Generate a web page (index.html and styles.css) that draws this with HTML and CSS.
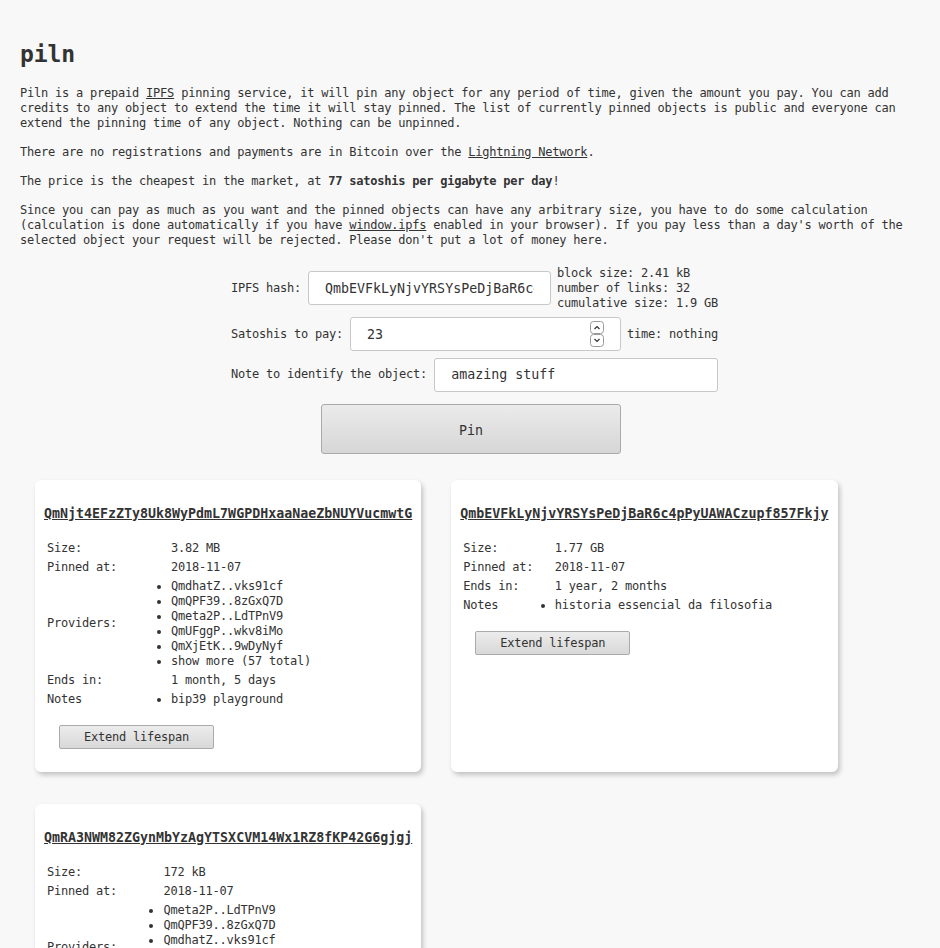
FILE: index.html
```html
<!DOCTYPE html>
<html lang="en">
<head>
<meta charset="utf-8">
<title>piln</title>
<link rel="stylesheet" href="styles.css">
</head>
<body>
<h1 class="title">piln</h1>
<p class="text">Piln is a prepaid <a href="#">IPFS</a> pinning service, it will pin any object for any period of time, given the amount you pay. You can add credits to any object to extend the time it will stay pinned. The list of currently pinned objects is public and everyone can extend the pinning time of any object. Nothing can be unpinned.</p>
<p class="text">There are no registrations and payments are in Bitcoin over the <a href="#">Lightning Network</a>.</p>
<p class="text">The price is the cheapest in the market, at <b>77 satoshis per gigabyte per day</b>!</p>
<p class="text">Since you can pay as much as you want and the pinned objects can have any arbitrary size, you have to do some calculation (calculation is done automatically if you have <a href="#">window.ipfs</a> enabled in your browser). If you pay less than a day's worth of the selected object your request will be rejected. Please don't put a lot of money here.</p>

<form class="pin-form">
  <div class="row">
    <label class="label">IPFS hash:</label>
    <input class="field" type="text" value="QmbEVFkLyNjvYRSYsPeDjBaR6c4pPyUAWACzupf857Fkjy">
    <div class="info">block size: 2.41 kB<br>number of links: 32<br>cumulative size: 1.9 GB</div>
  </div>
  <div class="row">
    <label class="label">Satoshis to pay:</label>
    <div class="field-wrap">
      <input class="field number" type="number" value="23">
      <span class="spinner"><svg width="14" height="26" viewBox="0 0 14 26"><rect x="0.5" y="0.5" width="13" height="12" rx="3" fill="#fff" stroke="#999"/><rect x="0.5" y="13.5" width="13" height="12" rx="3" fill="#fff" stroke="#999"/><path d="M4.5 8 L7 5.5 L9.5 8" fill="none" stroke="#333" stroke-width="1.2"/><path d="M4.5 18 L7 20.5 L9.5 18" fill="none" stroke="#333" stroke-width="1.2"/></svg></span>
    </div>
    <div class="info">time: nothing</div>
  </div>
  <div class="row">
    <label class="label">Note to identify the object:</label>
    <input class="field" type="text" value="amazing stuff">
  </div>
  <button class="pin" type="button">Pin</button>
</form>

<div class="objects">
  <div class="card">
    <a class="hash" href="#">QmNjt4EFzZTy8Uk8WyPdmL7WGPDHxaaNaeZbNUYVucmwtG</a>
    <table class="details">
      <tr><td>Size:</td><td>3.82 MB</td></tr>
      <tr><td>Pinned at:</td><td>2018-11-07</td></tr>
      <tr><td>Providers:</td><td><ul class="list"><li>QmdhatZ..vks91cf</li><li>QmQPF39..8zGxQ7D</li><li>Qmeta2P..LdTPnV9</li><li>QmUFggP..wkv8iMo</li><li>QmXjEtK..9wDyNyf</li><li>show more (57 total)</li></ul></td></tr>
      <tr><td>Ends in:</td><td>1 month, 5 days</td></tr>
      <tr><td>Notes</td><td><ul class="list"><li>bip39 playground</li></ul></td></tr>
    </table>
    <button class="extend" type="button">Extend lifespan</button>
  </div>
  <div class="card">
    <a class="hash" href="#">QmbEVFkLyNjvYRSYsPeDjBaR6c4pPyUAWACzupf857Fkjy</a>
    <table class="details">
      <tr><td>Size:</td><td>1.77 GB</td></tr>
      <tr><td>Pinned at:</td><td>2018-11-07</td></tr>
      <tr><td>Ends in:</td><td>1 year, 2 months</td></tr>
      <tr><td>Notes</td><td><ul class="list"><li>historia essencial da filosofia</li></ul></td></tr>
    </table>
    <button class="extend" type="button">Extend lifespan</button>
  </div>
  <div class="card">
    <a class="hash" href="#">QmRA3NWM82ZGynMbYzAgYTSXCVM14Wx1RZ8fKP42G6gjgj</a>
    <table class="details">
      <tr><td>Size:</td><td>172 kB</td></tr>
      <tr><td>Pinned at:</td><td>2018-11-07</td></tr>
      <tr><td>Providers:</td><td><ul class="list"><li>Qmeta2P..LdTPnV9</li><li>QmQPF39..8zGxQ7D</li><li>QmdhatZ..vks91cf</li><li>QmUFggP..wkv8iMo</li><li>QmXjEtK..9wDyNyf</li><li>show more (112 total)</li></ul></td></tr>
      <tr><td>Ends in:</td><td>3 months, 12 days</td></tr>
      <tr><td>Notes</td><td><ul class="list"><li>hyperboria wiki mirror</li></ul></td></tr>
    </table>
    <button class="extend" type="button">Extend lifespan</button>
  </div>
</div>
</body>
</html>
```
FILE: styles.css
```css
html, body {
  background: #f8f8f8;
}
body {
  margin: 0;
  padding: 0 20px;
  color: #333;
  font-family: "DejaVu Sans Mono", monospace;
  font-size: 12px;
  letter-spacing: -0.22px;
  line-height: 15px;
}
a {
  color: #333;
  text-decoration: underline;
}
.title {
  margin: 40px 0 17.5px;
  font-size: 23px;
  line-height: 28px;
  letter-spacing: -0.1px;
  font-weight: bold;
}
.text {
  margin: 0 0 14px;
}
.pin-form {
  width: 487px;
  margin: 18px 0 0 211px;
  display: flex;
  flex-direction: column;
  gap: 6.5px;
}
.row {
  display: flex;
  align-items: center;
}
.label {
  margin-right: 7px;
  white-space: nowrap;
}
.field {
  flex: 1;
  min-width: 0;
  height: 34px;
  box-sizing: border-box;
  border: 1px solid #c8c8c8;
  border-radius: 3px;
  background: #fff;
  padding: 0 16px;
  font-family: "DejaVu Sans Mono", monospace;
  font-size: 13.3px;
  color: #333;
  outline: none;
}
.number {
  width: 100%;
  -moz-appearance: textfield;
}
.number::-webkit-inner-spin-button,
.number::-webkit-outer-spin-button {
  -webkit-appearance: none;
  margin: 0;
}
.field-wrap {
  flex: 1;
  display: flex;
  position: relative;
}
.spinner {
  position: absolute;
  right: 17px;
  top: 4px;
  width: 14px;
  height: 26px;
  line-height: 0;
}
.info {
  margin-left: 6px;
  white-space: nowrap;
}
.pin {
  width: 300px;
  height: 50px;
  margin: 5.5px 0 0 90px;
  padding: 3px 0 0;
  border: 1px solid #aaa;
  border-radius: 3px;
  background: linear-gradient(#ebebeb, #d6d6d6);
  color: #333;
  font-family: "DejaVu Sans Mono", monospace;
  font-size: 13.3px;
}
.objects {
  display: flex;
  flex-wrap: wrap;
  margin-top: 11px;
}
.card {
  margin: 15px 15px 17px;
  padding: 9px;
  background: #fff;
  border-radius: 6px;
  box-shadow: 2px 3px 5px rgba(0, 0, 0, 0.22);
}
.hash {
  display: block;
  margin: 16px 0 15px;
  font-size: 13.3px;
  line-height: 18px;
  letter-spacing: 0;
  font-weight: bold;
}
.details {
  width: 100%;
  border-spacing: 2px;
  font-size: 12px;
}
.details td {
  padding: 1px;
  vertical-align: middle;
}
.list {
  margin: 0;
  padding: 0;
  list-style: disc outside;
}
.extend {
  display: block;
  width: 155px;
  height: 24px;
  margin: 15px 15px 14px;
  padding: 0;
  border: 1px solid #aaa;
  border-radius: 2px;
  background: linear-gradient(#ececec, #d8d8d8);
  color: #333;
  font-family: "DejaVu Sans Mono", monospace;
  font-size: 12px;
  letter-spacing: -0.22px;
}
```
